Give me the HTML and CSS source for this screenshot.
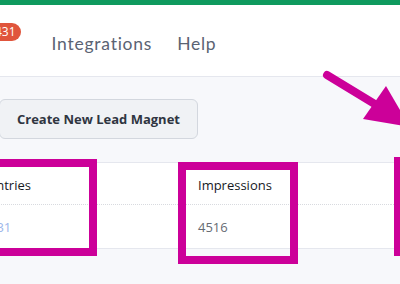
FILE: index.html
```html
<!DOCTYPE html>
<html>
<head>
<meta charset="utf-8">
<link rel="stylesheet" href="styles.css">
</head>
<body>
<div class="page">
  <div class="topbar"></div>
  <header class="header">
    <span class="badge">431</span>
    <nav class="nav">
      <a class="nav-link">Integrations</a>
      <a class="nav-link">Help</a>
    </nav>
  </header>
  <main class="content">
    <button class="btn">Create New Lead Magnet</button>
    <div class="card">
      <div class="col">
        <div class="cell head">Entries</div>
        <div class="cell val link">131</div>
      </div>
      <div class="col">
        <div class="cell head">Impressions</div>
        <div class="cell val">4516</div>
      </div>
      <div class="col">
        <div class="cell head">Conversion</div>
        <div class="cell val">2.9%</div>
      </div>
    </div>
  </main>
  <div class="mark mark-1"></div>
  <div class="mark mark-2"></div>
  <div class="mark mark-3"></div>
  <svg class="arrow" width="400" height="284" viewBox="0 0 400 284">
    <line x1="327" y1="75" x2="378" y2="106" stroke="#cc0099" stroke-width="8" stroke-linecap="round"/>
    <polygon points="386,86 363,119 410,127" fill="#cc0099"/>
  </svg>
</div>
</body>
</html>
```
FILE: styles.css
```css
* { box-sizing: border-box; }
html, body { margin: 0; padding: 0; }
body {
  width: 400px;
  height: 284px;
  overflow: hidden;
  background: #f7f8fb;
  font-family: "Open Sans", "Liberation Sans", sans-serif;
}
.page { position: relative; width: 400px; height: 284px; overflow: hidden; }
.topbar { height: 5px; background: #0f9a5e; }
.header {
  height: 72px;
  background: #fff;
  border-bottom: 1px solid #e5e7ee;
  display: flex;
  align-items: center;
  margin-left: -14px;
}
.badge {
  align-self: flex-start;
  margin-top: 18px;
  height: 18px;
  padding: 0 5px 0 9px;
  border-radius: 9px;
  background: #e0553c;
  color: #fff;
  font-size: 12px;
  line-height: 18px;
}
.nav { display: flex; gap: 25px; margin-left: 31px; margin-top: 6px; }
.nav-link {
  font-family: "Lato", "Open Sans", sans-serif;
  font-size: 17.5px;
  color: #5b6373;
  letter-spacing: 0.75px;
}
.content { padding-top: 22px; }
.btn {
  display: block;
  margin-left: -1px;
  width: 199px;
  height: 40px;
  border: 1px solid #d3d7de;
  border-radius: 6px;
  background: #f0f2f5;
  color: #2f3541;
  font-family: "Open Sans", sans-serif;
  font-weight: 700;
  font-size: 13px;
  text-align: left;
  padding: 0 0 0 17px;
}
.card {
  margin-top: 23px;
  margin-left: -27px;
  width: 440px;
  background: #fff;
  border-top: 1px solid #e5e7ee;
  border-bottom: 1px solid #e5e7ee;
  display: flex;
}
.col { width: 209px; flex: none; }
.cell {
  padding: 0 16px;
  font-size: 13px;
  display: flex;
  align-items: center;
}
.head { height: 42px; color: #16191e; border-bottom: 1px dotted #d8dadf; padding-top: 2px; }
.val { height: 43px; color: #666b73; }
.link { color: #9db6ea; }
.mark {
  position: absolute;
  border: 8px solid #cc0099;
}
.mark-1 { left: -20px; top: 159px; width: 117px; height: 97px; }
.mark-2 { left: 178px; top: 162px; width: 120px; height: 102px; }
.mark-3 { left: 394px; top: 157px; width: 120px; height: 99px; }
.arrow { position: absolute; left: 0; top: 0; }
```
